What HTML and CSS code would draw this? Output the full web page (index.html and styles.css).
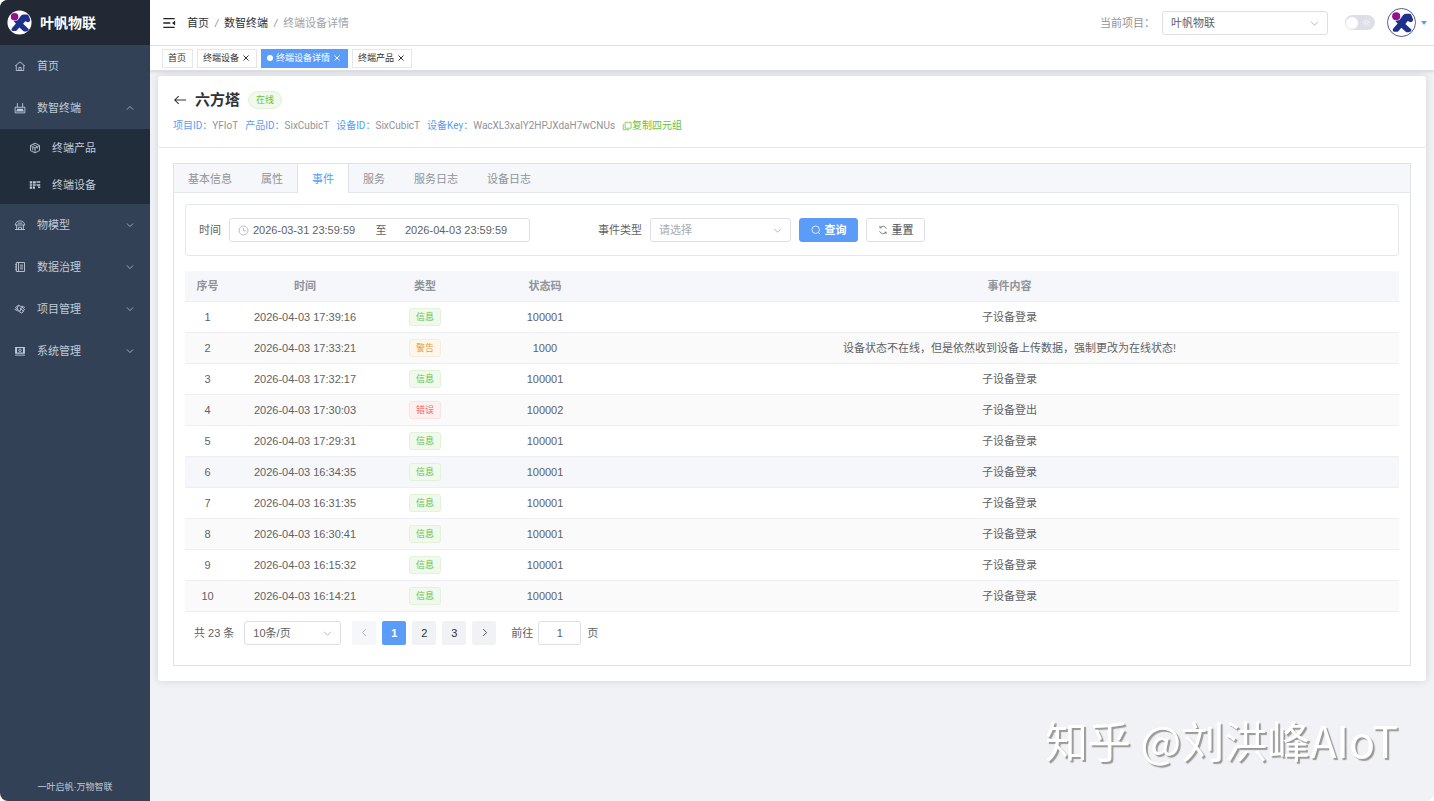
FILE: index.html
```
<!DOCTYPE html>
<html lang="zh-CN">
<head>
  <meta charset="UTF-8">
  <title>叶帆物联 - 终端设备详情</title>
  <link rel="stylesheet" href="styles.css">
</head>
<body>

  <svg class="sprite" aria-hidden="true">
    <symbol id="down" viewBox="0 0 16 16"><path d="M3 5.500l5 5 5-5"/></symbol>
    <symbol id="up" viewBox="0 0 16 16"><path d="M3 10.500l5-5 5 5"/></symbol>
    <symbol id="left" viewBox="0 0 16 16"><path d="M10 3L5 8l5 5"/></symbol>
    <symbol id="right" viewBox="0 0 16 16"><path d="M6 3l5 5-5 5"/></symbol>
    <symbol id="close" viewBox="0 0 16 16"><path d="M3 3l10 10M13 3L3 13"/></symbol>
    <symbol id="logo" viewBox="0 0 28 28">
      <circle cx="14" cy="14" r="13.500" fill="#fff"/>
      <circle cx="8.500" cy="7.500" r="4.200" fill="#93118a"/>
      <path fill="#1e2f8c" d="M15.500 6.500Q17 5 19 5H22.500Q23.800 5.200 24.300 6.500L26 11Q26 13.500 23.500 13.800L20.500 12.500 18 15.500 24.500 21.500Q24 23.800 21.500 24H19L13.800 19.500 10.500 23.300Q7.500 24 5.200 23 4.500 21.800 5.500 20.300L10 15 7.500 12.500 12 11.500Z"/>
    </symbol>
  </svg>

  <div class="app">
    <aside class="sidebar">
      <div class="brand">
        <svg class="brand-logo"><use href="#logo"/></svg>
        <span>叶帆物联</span>
      </div>
      <nav class="menu">
        <a class="menu-item" href="#">
          <svg class="icon" viewBox="0 0 16 16"><path d="M1.500 8L8 2.500 14.500 8M3 7v7h10V7M6.500 14v-4h3v4"/></svg>
          <span>首页</span>
        </a>
        <a class="menu-item" href="#">
          <svg class="icon" viewBox="0 0 16 16"><path d="M1.500 7h13v7.500h-13zM4.500 7V1.500M11.500 7V1.500M2.500 12h11"/><path class="fill" d="M4 9h8v3H4z"/></svg>
          <span>数智终端</span>
          <svg class="arrow"><use href="#up"/></svg>
        </a>
        <div class="submenu">
          <a class="menu-item" href="#">
            <svg class="icon" viewBox="0 0 16 16"><path d="M8 1.500l6 3v7l-6 3-6-3v-7zM8 14V8l5.500-3M8 8L2.500 5M5 3.200l6 3V9M5 7v4"/></svg>
            <span>终端产品</span>
          </a>
          <a class="menu-item" href="#">
            <svg class="icon" viewBox="0 0 16 16"><path class="fill" d="M1 3h3v3H1zM5 3h4v3H5zM10 3h5v2h-5zM1 7h3v2H1zM5 7h4v2H5zM1 10h3v3H1zM5 10h3v3H5zM10 7h5v2h-5zM12 10h3v2h-3z"/></svg>
            <span>终端设备</span>
          </a>
        </div>
        <a class="menu-item" href="#">
          <svg class="icon" viewBox="0 0 16 16"><path d="M1.500 8C2 4.500 5 2.500 8 2.500s6 2 6.500 5.500zM3.500 8v6M12.500 8v6M1.500 14h13M6 14v-3h4v3M5 5.500h6"/></svg>
          <span>物模型</span>
          <svg class="arrow"><use href="#down"/></svg>
        </a>
        <a class="menu-item" href="#">
          <svg class="icon" viewBox="0 0 16 16"><path d="M3 2h11v12H3zM6 2v12M8 5.500h4M8 8h4M8 10.500h4M1.500 5H4M1.500 8H4M1.500 11H4"/></svg>
          <span>数据治理</span>
          <svg class="arrow"><use href="#down"/></svg>
        </a>
        <a class="menu-item" href="#">
          <svg class="icon" viewBox="0 0 16 16"><path d="M2 6l4-3 4 2 4 3.500-3.500 5L6 11zM6 3L4 8l4 3 2-6M1 8l3 3M8 7l5 4M10.500 4l4 2"/></svg>
          <span>项目管理</span>
          <svg class="arrow"><use href="#down"/></svg>
        </a>
        <a class="menu-item" href="#">
          <svg class="icon" viewBox="0 0 16 16"><path class="fill" fill-rule="evenodd" d="M1.500 2.500h13v9h-13zM4 4v6h8V4z"/><circle cx="8" cy="7" r="1.700"/><path d="M1.500 13.500h13"/></svg>
          <span>系统管理</span>
          <svg class="arrow"><use href="#down"/></svg>
        </a>
      </nav>
      <div class="slogan">一叶启帆·万物智联</div>
    </aside>

    <div class="main">
      <header class="navbar">
        <button class="fold" type="button" aria-label="收起菜单">
          <svg viewBox="0 0 16 16"><path d="M1.500 3h13M1.500 8h8M1.500 13h13"/><path class="fill" d="M15 5.200v5.600L11.500 8z"/></svg>
        </button>
        <nav class="breadcrumb">
          <a href="#">首页</a><i>/</i><a href="#">数智终端</a><i>/</i><span>终端设备详情</span>
        </nav>
        <label class="project-label" for="project">当前项目：</label>
        <div class="select project">
          <select id="project"><option>叶帆物联</option></select>
          <svg class="arrow"><use href="#down"/></svg>
        </div>
        <label class="switch">
          <input type="checkbox" aria-label="深色模式">
          <svg viewBox="0 0 16 16"><circle cx="8" cy="8" r="3"/><path d="M8 1v2M8 13v2M1 8h2M13 8h2M3 3l1.500 1.500M11.500 11.500L13 13M13 3l-1.500 1.500M3 13l1.500-1.500"/></svg>
        </label>
        <button class="avatar" type="button" aria-label="用户菜单">
          <svg><use href="#logo"/></svg>
          <b></b>
        </button>
      </header>

      <div class="tags-view">
        <a class="view-tag" href="#">首页</a>
        <a class="view-tag" href="#">终端设备<svg><use href="#close"/></svg></a>
        <a class="view-tag active" href="#">终端设备详情<svg><use href="#close"/></svg></a>
        <a class="view-tag" href="#">终端产品<svg><use href="#close"/></svg></a>
      </div>

      <main class="content">
        <section class="card">
          <div class="card-header">
            <div class="title-row">
              <button class="back" type="button" aria-label="返回">
                <svg viewBox="0 0 16 16"><path d="M15 8H2.500M6.500 3.500L2 8l4.500 4.500"/></svg>
              </button>
              <h1>六方塔</h1>
              <span class="status">在线</span>
            </div>
            <div class="info-row">
              <span><b>项目ID：</b>YFIoT</span>
              <span><b>产品ID：</b>SixCubicT</span>
              <span><b>设备ID：</b>SixCubicT</span>
              <span><b>设备Key：</b>WacXL3xalY2HPJXdaH7wCNUs</span>
              <a class="copy" href="#"><svg viewBox="0 0 16 16"><path d="M5 2h9.500v9.500H5zM2 4.500V14h9.500"/></svg>复制四元组</a>
            </div>
          </div>

          <div class="tabs">
            <div class="tabs-header">
              <button type="button">基本信息</button>
              <button type="button">属性</button>
              <button type="button" class="active">事件</button>
              <button type="button">服务</button>
              <button type="button">服务日志</button>
              <button type="button">设备日志</button>
            </div>
            <div class="tabs-body">
              <form class="search">
                <label for="start">时间</label>
                <div class="range">
                  <svg viewBox="0 0 16 16"><circle cx="8" cy="8" r="6.500"/><path d="M8 4v4.500h3.500"/></svg>
                  <input id="start" type="text" value="2026-03-31 23:59:59">
                  <span>至</span>
                  <input type="text" aria-label="结束时间" value="2026-04-03 23:59:59">
                </div>
                <label class="type-label" for="type">事件类型</label>
                <div class="select type">
                  <select id="type" class="placeholder"><option>请选择</option></select>
                  <svg class="arrow"><use href="#down"/></svg>
                </div>
                <button type="button" class="btn primary">
                  <svg viewBox="0 0 16 16"><circle cx="7.500" cy="7.500" r="6"/><path d="M12 12l2.500 2.500"/></svg>查询
                </button>
                <button type="button" class="btn">
                  <svg viewBox="0 0 16 16"><path d="M13.500 6A6 6 0 0 0 3 4.500V1.500M3 4.500h3M2.500 10A6 6 0 0 0 13 11.500v3M13 11.500h-3"/></svg>重置
                </button>
              </form>

              <table class="events">
                <colgroup><col class="col-no"><col class="col-time"><col class="col-type"><col class="col-code"><col></colgroup>
                <thead>
                  <tr><th>序号</th><th>时间</th><th>类型</th><th>状态码</th><th>事件内容</th></tr>
                </thead>
                <tbody>
                  <tr><td>1</td><td>2026-04-03 17:39:16</td><td><span class="tag">信息</span></td><td>100001</td><td>子设备登录</td></tr>
                  <tr><td>2</td><td>2026-04-03 17:33:21</td><td><span class="tag warning">警告</span></td><td>1000</td><td>设备状态不在线，但是依然收到设备上传数据，强制更改为在线状态!</td></tr>
                  <tr><td>3</td><td>2026-04-03 17:32:17</td><td><span class="tag">信息</span></td><td>100001</td><td>子设备登录</td></tr>
                  <tr><td>4</td><td>2026-04-03 17:30:03</td><td><span class="tag danger">错误</span></td><td>100002</td><td>子设备登出</td></tr>
                  <tr><td>5</td><td>2026-04-03 17:29:31</td><td><span class="tag">信息</span></td><td>100001</td><td>子设备登录</td></tr>
                  <tr class="hover"><td>6</td><td>2026-04-03 16:34:35</td><td><span class="tag">信息</span></td><td>100001</td><td>子设备登录</td></tr>
                  <tr><td>7</td><td>2026-04-03 16:31:35</td><td><span class="tag">信息</span></td><td>100001</td><td>子设备登录</td></tr>
                  <tr><td>8</td><td>2026-04-03 16:30:41</td><td><span class="tag">信息</span></td><td>100001</td><td>子设备登录</td></tr>
                  <tr><td>9</td><td>2026-04-03 16:15:32</td><td><span class="tag">信息</span></td><td>100001</td><td>子设备登录</td></tr>
                  <tr><td>10</td><td>2026-04-03 16:14:21</td><td><span class="tag">信息</span></td><td>100001</td><td>子设备登录</td></tr>
                </tbody>
              </table>

              <div class="pagination">
                <span>共 23 条</span>
                <div class="select page-size">
                  <select aria-label="每页条数"><option>10条/页</option></select>
                  <svg class="arrow"><use href="#down"/></svg>
                </div>
                <div class="pager">
                  <button type="button" disabled aria-label="上一页"><svg><use href="#left"/></svg></button>
                  <button type="button" class="active">1</button>
                  <button type="button">2</button>
                  <button type="button">3</button>
                  <button type="button" aria-label="下一页"><svg><use href="#right"/></svg></button>
                </div>
                <label for="jump">前往</label>
                <input id="jump" type="text" value="1">
                <span>页</span>
              </div>
            </div>
          </div>
        </section>
      </main>
    </div>
  </div>

  <div class="watermark">知乎 @刘洪峰AIoT</div>

</body>
</html>
```
FILE: styles.css
```
* {
  box-sizing: border-box;
}

body {
  margin: 0;
  font-family: "Liberation Sans", "Noto Sans CJK SC", sans-serif;
  font-size: 11px;
  line-height: 16px;
  color: #606266;
  background: #fff;
}

a {
  color: inherit;
  text-decoration: none;
}

button, input, select {
  font: inherit;
  color: inherit;
  margin: 0;
}

button {
  padding: 0;
  border: none;
  background: none;
  cursor: pointer;
}

svg {
  display: block;
  flex: none;
  width: 12px;
  height: 12px;
  fill: none;
  stroke: currentColor;
  stroke-width: 1.2;
}

svg .fill {
  fill: currentColor;
  stroke: none;
}

.sprite {
  position: absolute;
  width: 0;
  height: 0;
}

.app {
  display: flex;
  min-height: 100vh;
  border-radius: 8px;
  overflow: hidden;
}

/* sidebar */
.sidebar {
  display: flex;
  flex-direction: column;
  flex: none;
  width: 150px;
  background: #334157;
  color: #bfcbd9;
}

.brand {
  display: flex;
  align-items: center;
  gap: 8px;
  height: 45px;
  padding-left: 7px;
  background: #222834;
  color: #fff;
  font-size: 14px;
  font-weight: bold;
}

.brand-logo {
  width: 25px;
  height: 25px;
  stroke: none;
}

.menu {
  flex: 1;
}

.menu-item {
  display: flex;
  align-items: center;
  gap: 11px;
  height: 42px;
  padding: 0 15px 0 14px;
}

.menu-item .arrow {
  width: 10px;
  height: 10px;
  margin-left: auto;
}

.submenu {
  display: grid;
  grid-template-rows: 1fr 1fr;
  height: 75px;
  background: #222d3c;
}

.submenu .menu-item {
  height: auto;
  padding-left: 29px;
}

.slogan {
  padding-bottom: 6px;
  font-size: 9px;
  text-align: center;
}

/* top bar */
.main {
  display: flex;
  flex-direction: column;
  flex: 1;
  min-width: 0;
  background: #f0f2f5;
}

.navbar {
  display: flex;
  align-items: center;
  height: 46px;
  padding: 0 7px 0 12px;
  background: #fff;
  border-bottom: 1px solid #e4e6ea;
}

.fold svg {
  width: 14px;
  height: 14px;
  color: #222;
  stroke-width: 1.5;
}

.breadcrumb {
  display: flex;
  margin: 0 auto 0 11px;
  color: #303133;
}

.breadcrumb i {
  margin: 0 6px;
  color: #909399;
}

.breadcrumb span {
  color: #a0a4ab;
}

.project-label {
  margin-right: 7px;
  color: #909399;
}

.select {
  position: relative;
  height: 24px;
}

.select select {
  appearance: none;
  width: 100%;
  height: 100%;
  padding: 0 24px 0 8px;
  border: 1px solid #dcdfe6;
  border-radius: 3px;
  background: #fff;
}

.select .placeholder {
  color: #a8abb2;
}

.select .arrow {
  position: absolute;
  right: 8px;
  top: 7px;
  width: 11px;
  height: 11px;
  color: #a8abb2;
  pointer-events: none;
}

.project {
  width: 166px;
}

.switch {
  position: relative;
  width: 30px;
  height: 15px;
  margin: 0 12px 0 17px;
}

.switch input {
  appearance: none;
  display: flex;
  align-items: center;
  width: 30px;
  height: 15px;
  margin: 0;
  padding-left: 1px;
  border-radius: 8px;
  background: #dcdfe6;
}

.switch input::before {
  content: "";
  width: 12px;
  height: 12px;
  border-radius: 50%;
  background: #fff;
}

.switch svg {
  position: absolute;
  right: 4px;
  top: 3px;
  width: 9px;
  height: 9px;
  color: #fff;
}

.avatar {
  display: flex;
  align-items: center;
  gap: 5px;
}

.avatar svg {
  width: 29px;
  height: 29px;
  border: 1px solid #4c5590;
  border-radius: 50%;
  stroke: none;
}

.avatar b {
  border: 3px solid transparent;
  border-top: 4px solid #5a9cf8;
  border-bottom: none;
}

.tags-view {
  display: flex;
  align-items: center;
  gap: 4px;
  height: 25px;
  padding: 0 12px;
  background: #fff;
  border-bottom: 1px solid #dfe1e5;
  box-shadow: 0 1px 3px rgba(0, 0, 0, 0.12);
}

.view-tag {
  display: flex;
  align-items: center;
  gap: 3px;
  height: 19px;
  padding: 0 6px 0 5px;
  border: 1px solid #e4e7ed;
  color: #303133;
  font-size: 9px;
}

.view-tag svg {
  width: 8px;
  height: 8px;
  stroke-width: 2;
}

.view-tag.active {
  background: #5a9cf8;
  border-color: #5a9cf8;
  color: #fff;
}

.view-tag.active::before {
  content: "";
  width: 6px;
  height: 6px;
  border-radius: 50%;
  background: #fff;
}

/* device card */
.content {
  padding: 5px 8px;
}

.card {
  background: #fff;
  border-radius: 3px;
  box-shadow: 0 0 9px rgba(0, 0, 0, 0.13);
  padding-bottom: 15px;
}

.card-header {
  height: 72px;
  padding: 14px 15px 0;
  border-bottom: 1px solid #e4e7ed;
}

.title-row {
  display: flex;
  align-items: center;
  height: 20px;
}

.back svg {
  width: 14px;
  height: 14px;
  color: #303133;
}

h1 {
  margin: 0 8px;
  font-size: 15px;
  color: #303133;
}

.status {
  padding: 0 7px;
  border: 1px solid #e1f3d8;
  border-radius: 9px;
  background: #f0f9eb;
  color: #67c23a;
  font-size: 9px;
}

.info-row {
  display: flex;
  align-items: center;
  gap: 7px;
  margin-top: 8px;
  color: #909399;
  font-family: Roboto, "Noto Sans CJK SC", sans-serif;
  font-size: 10px;
}

.info-row b {
  color: #5a9cf8;
  font-weight: normal;
}

.copy {
  display: flex;
  align-items: center;
  color: #67c23a;
}

.copy svg {
  width: 10px;
  height: 10px;
}

.tabs {
  margin: 15px 15px 0;
  border: 1px solid #dfe2e8;
}

.tabs-header {
  display: flex;
  height: 29px;
  background: #f5f7fa;
  border-bottom: 1px solid #e4e7ed;
}

.tabs-header button {
  height: 29px;
  margin-left: -1px;
  padding: 0 14px;
  border: 1px solid transparent;
  border-width: 0 1px;
  color: #909399;
}

.tabs-header .active {
  border-color: #dfe2e8;
  background: #fff;
  color: #5a9cf8;
}

.tabs-body {
  padding: 11px 11px 20px;
}

.search {
  display: flex;
  align-items: center;
  height: 52px;
  padding: 0 13px;
  border: 1px solid #e4e7ed;
  border-radius: 3px;
}

.range {
  display: flex;
  align-items: center;
  width: 301px;
  height: 24px;
  margin-left: 8px;
  padding: 0 20px 0 8px;
  border: 1px solid #dcdfe6;
  border-radius: 3px;
}

.range svg {
  width: 11px;
  height: 11px;
  margin-right: 4px;
  color: #a8abb2;
}

.range input {
  flex: 1;
  min-width: 0;
  padding: 0;
  border: none;
  background: none;
}

.range span {
  width: 48px;
  text-align: center;
}

.type-label {
  margin: 0 8px 0 68px;
}

.type {
  width: 141px;
  margin-right: 8px;
}

.btn {
  display: flex;
  align-items: center;
  justify-content: center;
  gap: 4px;
  width: 59px;
  height: 24px;
  margin-right: 8px;
  border: 1px solid #dcdfe6;
  border-radius: 3px;
  font-weight: 500;
}

.btn svg {
  width: 10px;
  height: 10px;
}

.btn.primary {
  border-color: #5a9cf8;
  background: #5a9cf8;
  color: #fff;
  font-weight: bold;
}

.events {
  width: 100%;
  margin-top: 15px;
  border-collapse: collapse;
  table-layout: fixed;
  text-align: center;
}

.col-no { width: 45px; }
.col-time { width: 150px; }
.col-type { width: 90px; }
.col-code { width: 150px; }

.events th, .events td {
  height: 31px;
  padding: 0;
  border-bottom: 1px solid #ebeef5;
}

.events th {
  height: 30px;
  background: #f5f7fa;
  color: #909399;
  font-weight: bold;
}

.events tbody tr:nth-child(even) {
  background: #fafafa;
}

.events tbody .hover:nth-child(even) {
  background: #f5f7fa;
}

.tag {
  display: inline-block;
  padding: 0 6px;
  border: 1px solid #e1f3d8;
  border-radius: 3px;
  background: #f0f9eb;
  color: #67c23a;
  font-size: 9px;
  vertical-align: middle;
}

.tag.warning {
  border-color: #faecd8;
  background: #fdf6ec;
  color: #e6a23c;
}

.tag.danger {
  border-color: #fde2e2;
  background: #fef0f0;
  color: #f56c6c;
}

.pagination {
  display: flex;
  align-items: center;
  margin-top: 9px;
  padding-left: 9px;
}

.page-size {
  width: 97px;
  margin: 0 11px 0 10px;
}

.pager {
  display: flex;
  gap: 6px;
  margin-right: 15px;
}

.pager button {
  display: flex;
  align-items: center;
  justify-content: center;
  width: 24px;
  height: 24px;
  border-radius: 2px;
  background: #f0f2f5;
  color: #303133;
}

.pager svg {
  width: 11px;
  height: 11px;
}

.pager button:disabled {
  background: #f5f7fa;
  color: #a8abb2;
}

.pager .active {
  background: #5a9cf8;
  color: #fff;
  font-weight: bold;
}

.pagination input {
  width: 43px;
  height: 24px;
  margin: 0 6px 0 5px;
  border: 1px solid #dcdfe6;
  border-radius: 3px;
  text-align: center;
}

.watermark {
  position: fixed;
  right: 36px;
  bottom: 32px;
  color: #fff;
  font-family: "Noto Sans CJK SC", sans-serif;
  font-size: 43px;
  line-height: 60px;
  text-shadow: 2px 2px 1px #999;
}
```
